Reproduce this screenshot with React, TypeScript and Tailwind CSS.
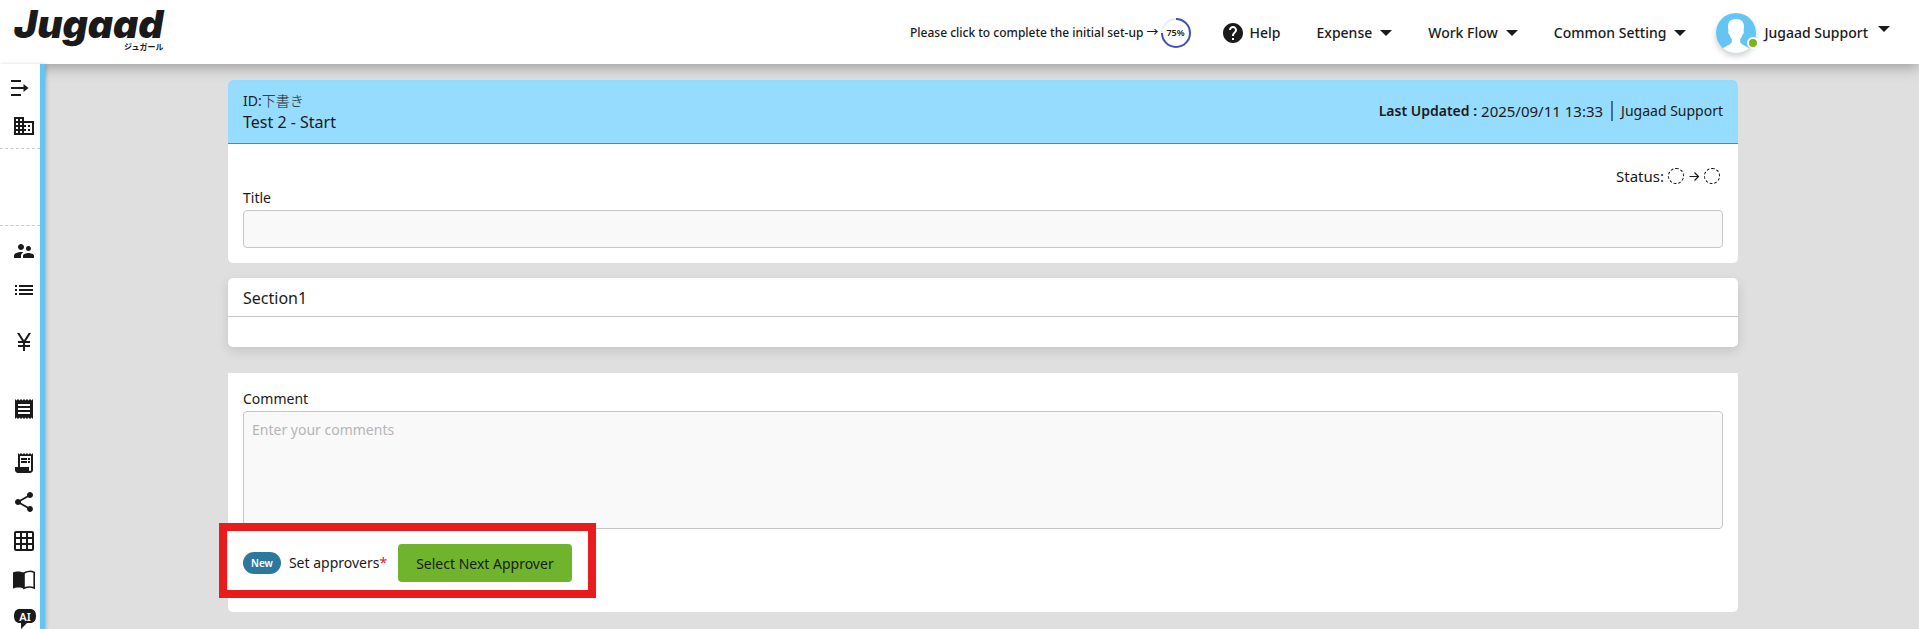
import type { ReactNode } from 'react';
import {
  MdBusiness,
  MdCurrencyYen,
  MdGridOn,
  MdHelp,
  MdList,
  MdReceipt,
  MdReceiptLong,
  MdShare,
  MdSupervisorAccount,
} from 'react-icons/md';

function ExpandIcon() {
  return (
    <svg className="h-5 w-5" fill="none" stroke="currentColor" strokeWidth="2" viewBox="0 0 20 20">
      <path d="M1 3h10M1 10h14M1 17h10" />
      <path d="M13.5 6l5 4-5 4z" fill="currentColor" stroke="none" />
    </svg>
  );
}

function BookIcon() {
  return (
    <svg className="h-6 w-6" viewBox="0 0 24 24">
      <path d="M12 5C9 3 4 3 1 4.500V20.500c3-1.500 8-1.500 11 0z" fill="currentColor" />
      <path d="M12 5c3-2 7.500-2 10.200-.6V20c-2.700-1.200-7.200-1.200-10.200.3z" fill="none" stroke="currentColor" strokeWidth="1.600" />
    </svg>
  );
}

function AiIcon() {
  return (
    <span className="relative inline-flex h-5 w-[22px] justify-center">
      <svg className="absolute inset-0 h-5 w-[22px]" fill="currentColor" viewBox="0 0 22 20">
        <path d="M6 0h10c4 0 6 2.500 6 7s-2 7-6 7h-3l-6 6v-6H6c-4 0-6-2.500-6-7s2-7 6-7z" />
      </svg>
      <span className="relative text-[11px] leading-[15px] font-semibold text-white">AI</span>
    </span>
  );
}

function ArrowIcon() {
  return (
    <svg className="mx-1 h-3 w-3" fill="none" stroke="currentColor" strokeWidth="1.200" viewBox="0 0 12 12">
      <path d="M1.500 6.500h9M6.500 2.500l4 4-4 4" />
    </svg>
  );
}

function Avatar() {
  return (
    <span className="relative block h-10 w-10 rounded-full shadow-[0_3px_6px_rgba(0,0,0,0.2)]">
      <svg className="h-10 w-10 rounded-full" viewBox="0 0 40 40">
        <rect width="40" height="40" fill="#64c5f2" />
        <path
          d="M20 6c-5.500 0-8 3-8 7.500 0 2 .3 3 .6 4-.8.500-.5 3.500 1 4.200.6 2.300 1.400 3.300 2.200 4.300v3c0 2-4.500 3-9 6.500L10 40h20l3.200-4.500c-4.700-3.500-9-4.500-9-6.500v-3c.8-1 1.700-2 2.200-4.300 1.500-.7 1.900-3.700 1-4.200.4-1 .6-2 .6-4C28 9 25.500 6 20 6z"
          fill="#fff"
        />
      </svg>
      <span className="absolute -right-[3px] bottom-1 h-3 w-3 rounded-full border-2 border-white bg-[#7cb518]" />
    </span>
  );
}

function ProgressRing() {
  return (
    <span className="relative flex h-[30px] w-[30px] items-center justify-center">
      <svg className="absolute inset-0 h-[30px] w-[30px] -rotate-90" fill="none" strokeWidth="2" viewBox="0 0 30 30">
        <circle cx="15" cy="15" r="14" stroke="#e9eef0" />
        <circle cx="15" cy="15" r="14" stroke="#3f51b5" pathLength="100" strokeDasharray="75 100" />
      </svg>
      <span className="text-[9px] font-semibold">75%</span>
    </span>
  );
}

function Caret() {
  return (
    <svg className="h-[6px] w-3" fill="currentColor" viewBox="0 0 12 6">
      <path d="M0 0h12L6 6z" />
    </svg>
  );
}

const sideLinks: { label: string; height: string; icon: ReactNode }[] = [
  { label: 'Members', height: 'h-[39px]', icon: <MdSupervisorAccount className="h-6 w-6" /> },
  { label: 'List', height: 'h-[39px]', icon: <MdList className="h-6 w-6" /> },
  { label: 'Payments', height: 'h-[66px]', icon: <MdCurrencyYen className="h-6 w-6" /> },
  { label: 'Receipts', height: 'h-[68px]', icon: <MdReceipt className="h-6 w-6" /> },
  { label: 'Statements', height: 'h-[39px]', icon: <MdReceiptLong className="h-6 w-6" /> },
  { label: 'Share', height: 'h-[39px]', icon: <MdShare className="h-6 w-6" /> },
  { label: 'Table', height: 'h-[39px]', icon: <MdGridOn className="h-6 w-6" /> },
  { label: 'Manual', height: 'h-[39px]', icon: <BookIcon /> },
  { label: 'Assistant', height: 'h-[39px]', icon: <AiIcon /> },
];

function Header() {
  return (
    <header className="relative z-20 flex h-16 items-center justify-between bg-white pr-[29px] pl-[14px] shadow-[0_2px_14px_rgba(0,0,0,0.35)]">
      <a aria-label="Jugaad" className="flex flex-col items-end self-start" href="#home">
        <span className="font-[Inter,sans-serif] text-[39px] leading-[48px] font-black italic">Jugaad</span>
        <span className="-mt-2 text-[8px] leading-[14px] font-bold">ジュガール</span>
      </a>

      <nav className="mt-[2px] flex items-center text-sm font-medium whitespace-nowrap">
        <a className="flex items-center gap-[2px] text-xs" href="#setup">
          Please click to complete the initial set-up →
          <ProgressRing />
        </a>
        <a className="ml-[30px] flex items-center gap-[5px]" href="#help">
          <MdHelp className="h-6 w-6" />
          Help
        </a>
        <button className="ml-9 flex items-center gap-2" type="button">
          Expense <Caret />
        </button>
        <button className="ml-9 flex items-center gap-2" type="button">
          Work Flow <Caret />
        </button>
        <button className="ml-9 flex items-center gap-2" type="button">
          Common Setting <Caret />
        </button>
        <button className="ml-[30px] flex items-center gap-2" type="button">
          <Avatar />
          <span className="mr-[2px]">Jugaad Support</span>
          <span className="mb-2">
            <Caret />
          </span>
        </button>
      </nav>
    </header>
  );
}

function Sidebar() {
  return (
    <aside className="z-30 w-[45px] shrink-0 overflow-hidden border-r-[5px] border-[#64c5f2] bg-white shadow-[1px_1px_4px_rgba(0,0,0,0.25)]">
      <button aria-label="Expand menu" className="flex h-12 w-10 items-center justify-center" type="button">
        <ExpandIcon />
      </button>
      <a aria-label="Company" className="flex h-7 items-center justify-end pr-1" href="#company">
        <MdBusiness className="h-6 w-6" />
      </a>
      <div className="mt-2 mb-[5px] h-[78px] border-y border-dashed border-[#c8c8c8]" />
      {sideLinks.map((link) => (
        <a
          key={link.label}
          aria-label={link.label}
          className={`flex items-center justify-end pr-1 ${link.height}`}
          href={`#${link.label.toLowerCase()}`}
        >
          {link.icon}
        </a>
      ))}
    </aside>
  );
}

export default function App() {
  return (
    <div className="flex h-screen flex-col overflow-hidden bg-[#dfdfdf] font-['Noto_Sans','Noto_Sans_CJK_JP',sans-serif] text-[#1a1a1a]">
      <Header />
      <div className="flex min-h-0 flex-1">
        <Sidebar />
        <main className="min-w-0 flex-1 overflow-hidden px-6 pt-4 text-sm xl:pr-[181px] xl:pl-[183px]">
          <section className="rounded-[5px] bg-white">
            <div className="flex h-16 items-center justify-between rounded-t-[5px] border-b border-[#3a8fb7] bg-[#96dcff] px-[15px]">
              <div>
                <p className="leading-5">
                  ID:<span className="font-light">下書き</span>
                </p>
                <h1 className="text-base leading-[22px]">Test 2 - Start</h1>
              </div>
              <p className="flex items-center gap-1">
                <strong className="font-semibold">Last Updated :</strong>
                <span className="text-[15px]">2025/09/11 13:33</span>
                <span className="mx-1 h-5 w-[2px] bg-[#2f789d]" />
                <span>Jugaad Support</span>
              </p>
            </div>
            <div className="px-[15px] pt-[22px] pb-[15px]">
              <div className="flex items-center justify-end pr-[3px] leading-5">
                <span className="mr-1 text-[15px]">Status:</span>
                <span className="h-4 w-4 rounded-full border border-dashed border-black" />
                <ArrowIcon />
                <span className="h-4 w-4 rounded-full border border-dashed border-black" />
              </div>
              <label className="mt-[2px] mb-[2px] block leading-5" htmlFor="title">
                Title
              </label>
              <input
                className="block h-[38px] w-full rounded border border-[#c8c8c8] bg-[#f9f9f9] px-2"
                id="title"
                type="text"
              />
            </div>
          </section>

          <section className="mt-[15px] rounded-[5px] bg-white shadow-[0_4px_12px_rgba(0,0,0,0.12)]">
            <h2 className="border-b border-[#c8c8c8] px-[15px] pt-[9px] pb-[7px] text-base leading-[22px]">Section1</h2>
            <div className="h-[30px]" />
          </section>

          <section className="mt-[26px] rounded-b-[5px] bg-white px-[15px] pt-4 pb-[30px]">
            <label className="mb-[2px] block leading-5" htmlFor="comment">
              Comment
            </label>
            <textarea
              className="block h-[118px] w-full resize-none rounded border border-[#c8c8c8] bg-[#f9f9f9] px-2 py-2 leading-5 placeholder:text-[#b5b5b5]"
              id="comment"
              placeholder="Enter your comments"
            />
            <div className="relative mt-[15px] flex w-fit items-center">
              <span className="rounded-full bg-[#2f789d] px-2 text-[10px] leading-[22px] font-semibold text-white">New</span>
              <span className="ml-2">
                Set approvers<span className="text-[#e0202e]">*</span>
              </span>
              <button className="ml-[11px] h-[38px] rounded bg-[#6fb42c] px-[18px] pt-[2px]" type="button">
                Select Next Approver
              </button>
              <div className="pointer-events-none absolute -inset-x-6 -top-[21px] -bottom-4 border-8 border-[#e81c1c]" />
            </div>
          </section>
        </main>
      </div>
    </div>
  );
}
